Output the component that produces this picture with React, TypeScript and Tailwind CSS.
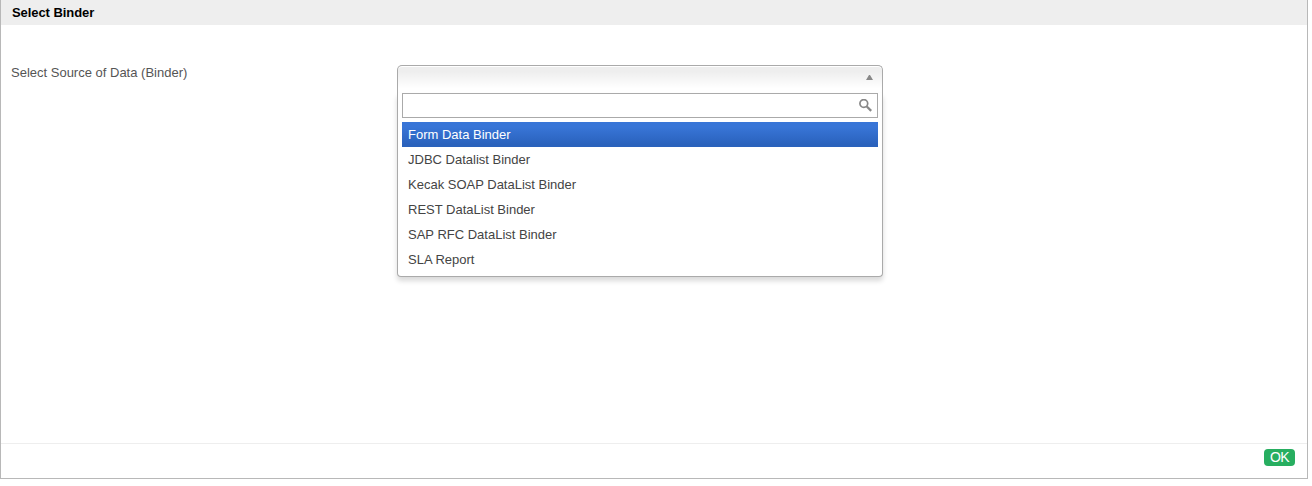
import { useState } from "react";

const binders = [
  "Form Data Binder",
  "JDBC Datalist Binder",
  "Kecak SOAP DataList Binder",
  "REST DataList Binder",
  "SAP RFC DataList Binder",
  "SLA Report",
];

function BinderSelect() {
  const [query, setQuery] = useState("");
  const [active, setActive] = useState(0);
  return (
    <div className="relative h-[29px] w-[486px]">
      <div className="flex h-[29px] justify-end rounded-t-[5px] border border-b-0 border-[#aaa] bg-[linear-gradient(#eee_20%,#fff_80%)] pr-[9px] pt-[9px] shadow-[inset_0_1px_0_#fff]">
        <svg className="h-[5px] w-[7px]" viewBox="0 0 7 5">
          <path d="M3 0H4L7 5H0Z" fill="#888" />
        </svg>
      </div>
      <div className="absolute left-0 top-[28px] w-full rounded-b border border-t-0 border-[#aaa] bg-white px-1 pb-1 shadow-[0_4px_5px_rgba(0,0,0,0.15)]">
        <div className="flex h-[25px] items-center border border-[#aaa] bg-white pr-[5px]">
          <input
            aria-label="Search binders"
            className="min-w-0 flex-1 px-1 text-[13px] outline-none"
            value={query}
            onChange={(e) => setQuery(e.target.value)}
          />
          <svg className="mb-px h-[13px] w-[13px]" viewBox="0 0 13 13" fill="none" stroke="#888">
            <circle cx="4.8" cy="4.5" r="3.9" strokeWidth="1.7" />
            <path d="M7.8 7.5L12.2 11.9" strokeWidth="2.3" />
          </svg>
        </div>
        <ul className="mt-1">
          {binders
            .filter((b) => b.toLowerCase().includes(query.toLowerCase()))
            .map((b, i) => (
              <li
                key={b}
                onMouseEnter={() => setActive(i)}
                className={
                  i === active
                    ? "h-[25px] bg-[linear-gradient(#3875d7_20%,#2a62bc_90%)] px-1.5 leading-[25px] text-white"
                    : "h-[25px] px-1.5 leading-[25px] text-[#444]"
                }
              >
                {b}
              </li>
            ))}
        </ul>
      </div>
    </div>
  );
}

export default function App() {
  return (
    <div className="h-[486px] bg-white font-['Liberation_Sans',Arial,sans-serif] text-[13px]">
      <div className="flex h-[479px] w-[1308px] flex-col border border-t-0 border-[#b8b8b8]">
        <h1 className="h-[25px] shrink-0 bg-[#eee] pl-[11px] font-bold leading-[25px] tracking-[-0.07px] text-black">Select Binder</h1>
        <main className="flex flex-1 items-start pt-10">
          <div className="w-[396px] pl-2.5 leading-[15px] text-[#555]">Select Source of Data (Binder)</div>
          <BinderSelect />
        </main>
        <footer className="flex h-[35px] shrink-0 items-start justify-end border-t border-[#eee] pr-3 pt-[5px]">
          <button className="h-[17px] w-[31px] rounded bg-[#27ae60] text-center text-[14px] leading-[17px] tracking-[-0.6px] text-white">OK</button>
        </footer>
      </div>
    </div>
  );
}
